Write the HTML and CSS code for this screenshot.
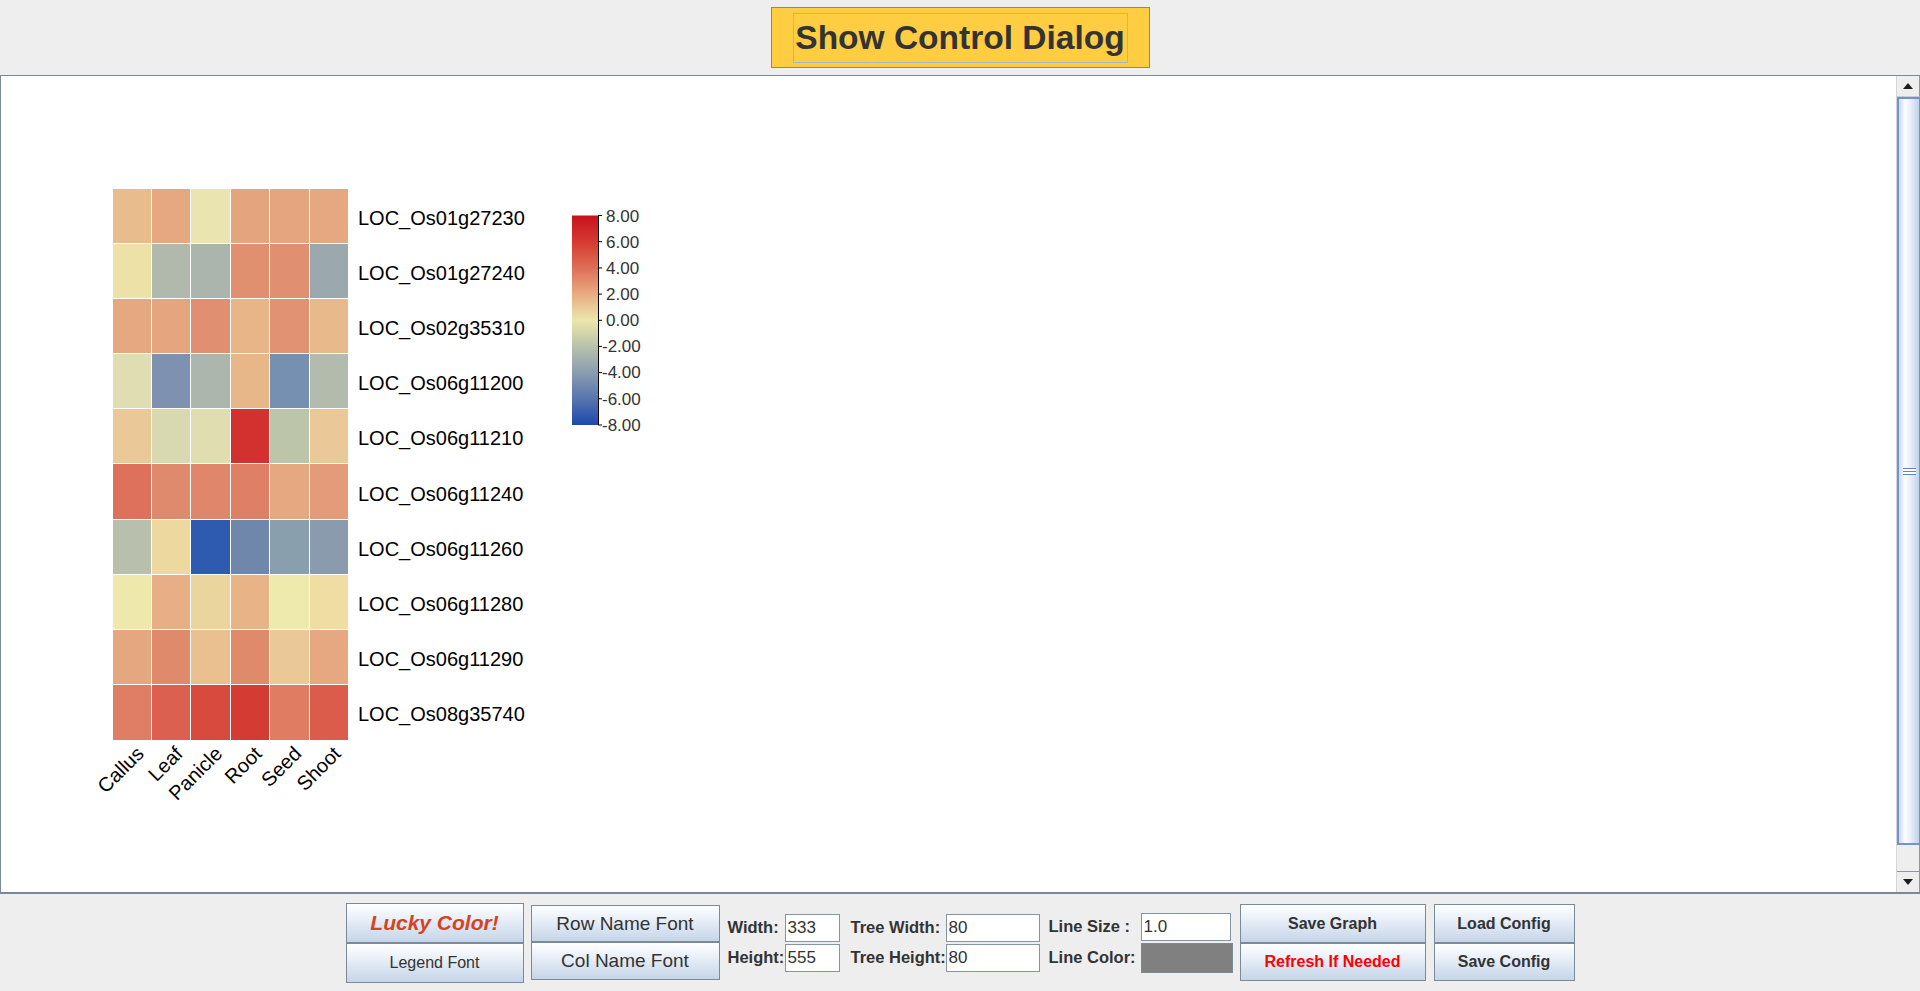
FILE: index.html
```html
<!DOCTYPE html>
<html>
<head>
<meta charset="utf-8">
<title>Heatmap</title>
<link rel="stylesheet" href="styles.css">
</head>
<body>
<header class="topbar">
  <button class="show-btn"><span class="show-focus">Show Control Dialog</span></button>
</header>

<div class="scrollpane">
  <div class="canvas">
    <svg width="700" height="760" viewBox="1 76 700 760" xmlns="http://www.w3.org/2000/svg">
      <defs>
        <linearGradient id="legendGrad" x1="0" y1="0" x2="0" y2="1">
          <stop offset="0" stop-color="#c8101e"/>
          <stop offset="0.125" stop-color="#d53a30"/>
          <stop offset="0.25" stop-color="#de6e58"/>
          <stop offset="0.375" stop-color="#e8ab82"/>
          <stop offset="0.5" stop-color="#ebe7ad"/>
          <stop offset="0.625" stop-color="#b9c1aa"/>
          <stop offset="0.75" stop-color="#8a9db0"/>
          <stop offset="0.875" stop-color="#5775ae"/>
          <stop offset="1" stop-color="#1e48ad"/>
        </linearGradient>
      </defs>
      <g class="cells">
        <!-- row 1 -->
        <rect x="113" y="189" width="38" height="54" fill="#e8bc8c"/>
        <rect x="152" y="189" width="38" height="54" fill="#e5a880"/>
        <rect x="191" y="189" width="39" height="54" fill="#eae5b0"/>
        <rect x="231" y="189" width="38" height="54" fill="#e4a47e"/>
        <rect x="270" y="189" width="39" height="54" fill="#e4a57f"/>
        <rect x="310" y="189" width="38" height="54" fill="#e5a880"/>
        <!-- row 2 -->
        <rect x="113" y="244" width="38" height="54" fill="#ede1a8"/>
        <rect x="152" y="244" width="38" height="54" fill="#b1b9ac"/>
        <rect x="191" y="244" width="39" height="54" fill="#abb5ad"/>
        <rect x="231" y="244" width="38" height="54" fill="#e0906f"/>
        <rect x="270" y="244" width="39" height="54" fill="#e08f70"/>
        <rect x="310" y="244" width="38" height="54" fill="#9ba9ae"/>
        <!-- row 3 -->
        <rect x="113" y="299" width="38" height="54" fill="#e5a880"/>
        <rect x="152" y="299" width="38" height="54" fill="#e5a67f"/>
        <rect x="191" y="299" width="39" height="54" fill="#e08f70"/>
        <rect x="231" y="299" width="38" height="54" fill="#e8b588"/>
        <rect x="270" y="299" width="39" height="54" fill="#e09272"/>
        <rect x="310" y="299" width="38" height="54" fill="#e8ba8b"/>
        <!-- row 4 -->
        <rect x="113" y="354" width="38" height="54" fill="#dfddb1"/>
        <rect x="152" y="354" width="38" height="54" fill="#7e91b0"/>
        <rect x="191" y="354" width="39" height="54" fill="#adb6ad"/>
        <rect x="231" y="354" width="38" height="54" fill="#e8b789"/>
        <rect x="270" y="354" width="39" height="54" fill="#7590b0"/>
        <rect x="310" y="354" width="38" height="54" fill="#b2bbac"/>
        <!-- row 5 -->
        <rect x="113" y="409" width="38" height="54" fill="#ebc898"/>
        <rect x="152" y="409" width="38" height="54" fill="#d8d9b0"/>
        <rect x="191" y="409" width="39" height="54" fill="#e0ddb0"/>
        <rect x="231" y="409" width="38" height="54" fill="#d33030"/>
        <rect x="270" y="409" width="39" height="54" fill="#bcc4aa"/>
        <rect x="310" y="409" width="38" height="54" fill="#ebc898"/>
        <!-- row 6 -->
        <rect x="113" y="464" width="38" height="55" fill="#de715b"/>
        <rect x="152" y="464" width="38" height="55" fill="#e08a6d"/>
        <rect x="191" y="464" width="39" height="55" fill="#e0866a"/>
        <rect x="231" y="464" width="38" height="55" fill="#df7f65"/>
        <rect x="270" y="464" width="39" height="55" fill="#e5a880"/>
        <rect x="310" y="464" width="38" height="55" fill="#e49b79"/>
        <!-- row 7 -->
        <rect x="113" y="520" width="38" height="54" fill="#b8c0ad"/>
        <rect x="152" y="520" width="38" height="54" fill="#edd9a0"/>
        <rect x="191" y="520" width="39" height="54" fill="#2e5ab0"/>
        <rect x="231" y="520" width="38" height="54" fill="#6e87ab"/>
        <rect x="270" y="520" width="39" height="54" fill="#8a9fae"/>
        <rect x="310" y="520" width="38" height="54" fill="#8a9bad"/>
        <!-- row 8 -->
        <rect x="113" y="575" width="38" height="54" fill="#eee8ad"/>
        <rect x="152" y="575" width="38" height="54" fill="#e8af87"/>
        <rect x="191" y="575" width="39" height="54" fill="#ebd59e"/>
        <rect x="231" y="575" width="38" height="54" fill="#e8b387"/>
        <rect x="270" y="575" width="39" height="54" fill="#eee9ad"/>
        <rect x="310" y="575" width="38" height="54" fill="#efdda3"/>
        <!-- row 9 -->
        <rect x="113" y="630" width="38" height="54" fill="#e5a780"/>
        <rect x="152" y="630" width="38" height="54" fill="#e08a6c"/>
        <rect x="191" y="630" width="39" height="54" fill="#eac090"/>
        <rect x="231" y="630" width="38" height="54" fill="#e08a6c"/>
        <rect x="270" y="630" width="39" height="54" fill="#ebc898"/>
        <rect x="310" y="630" width="38" height="54" fill="#e5a880"/>
        <!-- row 10 -->
        <rect x="113" y="685" width="38" height="55" fill="#e07e65"/>
        <rect x="152" y="685" width="38" height="55" fill="#db6050"/>
        <rect x="191" y="685" width="39" height="55" fill="#d84a3e"/>
        <rect x="231" y="685" width="38" height="55" fill="#d43b32"/>
        <rect x="270" y="685" width="39" height="55" fill="#e07c62"/>
        <rect x="310" y="685" width="38" height="55" fill="#dc5c4c"/>
      </g>
      <g class="row-labels">
        <text x="358" y="225">LOC_Os01g27230</text>
        <text x="358" y="280">LOC_Os01g27240</text>
        <text x="358" y="335">LOC_Os02g35310</text>
        <text x="358" y="390">LOC_Os06g11200</text>
        <text x="358" y="445">LOC_Os06g11210</text>
        <text x="358" y="500.5">LOC_Os06g11240</text>
        <text x="358" y="556">LOC_Os06g11260</text>
        <text x="358" y="611">LOC_Os06g11280</text>
        <text x="358" y="666">LOC_Os06g11290</text>
        <text x="358" y="721">LOC_Os08g35740</text>
      </g>
      <g class="col-labels">
        <text transform="translate(145 755) rotate(-45)">Callus</text>
        <text transform="translate(184 755) rotate(-45)">Leaf</text>
        <text transform="translate(223.5 755) rotate(-45)">Panicle</text>
        <text transform="translate(263 755) rotate(-45)">Root</text>
        <text transform="translate(302.5 755) rotate(-45)">Seed</text>
        <text transform="translate(342 755) rotate(-45)">Shoot</text>
      </g>
      <g class="legend">
        <rect x="572" y="215.5" width="26" height="209.5" fill="url(#legendGrad)"/>
        <line x1="598.5" y1="215.5" x2="598.5" y2="425" stroke="#000" stroke-width="1"/>
        <path d="M598 215.5h4 M598 241.7h4 M598 267.9h4 M598 294.1h4 M598 320.3h4 M598 346.4h4 M598 372.6h4 M598 398.8h4 M598 425h4" stroke="#000" stroke-width="1"/>
        <text x="606" y="221.5">8.00</text>
        <text x="606" y="247.5">6.00</text>
        <text x="606" y="273.5">4.00</text>
        <text x="606" y="300">2.00</text>
        <text x="606" y="326">0.00</text>
        <text x="602" y="352">-2.00</text>
        <text x="602" y="378">-4.00</text>
        <text x="602" y="404.5">-6.00</text>
        <text x="602" y="430.5">-8.00</text>
      </g>
    </svg>
  </div>
  <div class="vscroll">
    <div class="sb-btn sb-up"><span class="arrow-up"></span></div>
    <div class="sb-thumb"><span class="grip"></span></div>
    <div class="sb-track"></div>
    <div class="sb-btn sb-down"><span class="arrow-down"></span></div>
  </div>
</div>

<footer class="toolbar">
  <div class="btn-stack stack-a">
    <button class="btn lucky">Lucky Color!</button>
    <button class="btn legend-font">Legend Font</button>
  </div>
  <div class="btn-stack stack-b">
    <button class="btn name-font">Row Name Font</button>
    <button class="btn name-font">Col Name Font</button>
  </div>
  <div class="form form-size">
    <label class="lbl">Width:</label><input class="field" value="333">
    <label class="lbl">Height:</label><input class="field" value="555">
  </div>
  <div class="form form-tree">
    <label class="lbl">Tree Width:</label><input class="field" value="80">
    <label class="lbl">Tree Height:</label><input class="field" value="80">
  </div>
  <div class="form form-line">
    <label class="lbl">Line Size :</label><input class="field" value="1.0">
    <label class="lbl">Line Color:</label><span class="swatch"></span>
  </div>
  <div class="btn-stack stack-c">
    <button class="btn bold">Save Graph</button>
    <button class="btn bold refresh">Refresh If Needed</button>
  </div>
  <div class="btn-stack stack-d">
    <button class="btn bold">Load Config</button>
    <button class="btn bold">Save Config</button>
  </div>
</footer>
</body>
</html>
```
FILE: styles.css
```css
* { box-sizing: border-box; }
html, body { margin: 0; padding: 0; }
body {
  width: 1920px;
  height: 991px;
  overflow: hidden;
  background: #eeeeee;
  font-family: "Liberation Sans", Arial, sans-serif;
  color: #333333;
}

/* top bar */
.topbar {
  height: 75px;
  display: flex;
  justify-content: center;
  align-items: center;
}
.show-btn {
  width: 379px;
  height: 61px;
  padding: 0;
  margin: 0;
  background: #ffcd42;
  border: 1px solid #7b8b9b;
  display: flex;
  align-items: center;
  justify-content: center;
  font-family: inherit;
}
.show-focus {
  width: 335px;
  height: 50px;
  border: 1px solid #a3b8cc;
  display: flex;
  align-items: center;
  justify-content: center;
  white-space: nowrap;
  font-weight: bold;
  font-size: 33.5px;
  color: #333333;
}

/* scroll pane */
.scrollpane {
  height: 819px;
  display: flex;
  border-top: 1px solid #7a8a99;
  border-left: 1px solid #7a8a99;
  border-bottom: 2px solid #7a8a99;
}
.canvas {
  flex: 1;
  background: #ffffff;
  overflow: hidden;
}
.canvas svg { display: block; }
.row-labels text,
.col-labels text {
  font-family: "Liberation Sans", Arial, sans-serif;
  font-size: 20px;
  fill: #000000;
}
.col-labels text { text-anchor: end; }
.legend text {
  font-family: "Liberation Sans", Arial, sans-serif;
  font-size: 17px;
  fill: #333333;
}

.vscroll {
  width: 24px;
  display: flex;
  flex-direction: column;
  background: #eeeeee;
  border-left: 1px solid #d6d6d6;
}
.sb-btn {
  height: 21px;
  display: flex;
  align-items: center;
  justify-content: center;
  border-right: 1px solid #8a98a6;
}
.sb-up { border-bottom: 1px solid #c4ccd4; }
.sb-down { border-top: 1px solid #8a98a6; }
.arrow-up {
  width: 0; height: 0;
  border-left: 5px solid transparent;
  border-right: 5px solid transparent;
  border-bottom: 6px solid #1e1e1e;
}
.arrow-down {
  width: 0; height: 0;
  border-left: 5px solid transparent;
  border-right: 5px solid transparent;
  border-top: 6px solid #1e1e1e;
}
.sb-thumb {
  height: 748px;
  border: 1px solid #7393cf;
  border-width: 2px 1px 2px 2px;
  background: linear-gradient(to right, #c9dbf1 0%, #fbfdff 30%, #e6eef8 60%, #bfd3ea 100%);
  display: flex;
  align-items: center;
  justify-content: center;
}
.grip {
  width: 13px;
  height: 7px;
  background: repeating-linear-gradient(to bottom, #6683c4 0 1px, #ffffff 1px 3px);
}
.sb-track {
  flex: 1;
  border-right: 1px solid #8a98a6;
}

/* bottom toolbar */
.toolbar {
  height: 97px;
  display: flex;
  justify-content: center;
  align-items: center;
}
.btn-stack {
  display: flex;
  flex-direction: column;
}
.btn {
  margin: 0;
  padding: 0;
  border: 1px solid #7a8a99;
  background: linear-gradient(to bottom, #ffffff 0%, #eef3fa 30%, #c5d5e8 100%);
  display: flex;
  align-items: center;
  justify-content: center;
  font-family: "Liberation Sans", Arial, sans-serif;
  color: #333333;
}
.stack-a { width: 178px; }
.stack-a .btn { height: 40px; }
.lucky {
  font-size: 21px;
  font-weight: bold;
  font-style: italic;
  color: #d9411f;
}
.legend-font { font-size: 16px; }

.stack-b { width: 189px; margin-left: 7px; }
.stack-b .btn:first-child { height: 37px; }
.stack-b .btn:last-child { height: 38px; }
.name-font { font-size: 19px; }

.form {
  display: grid;
  row-gap: 2px;
  align-items: center;
}
.lbl {
  font-size: 16.5px;
  font-weight: bold;
  color: #333333;
  white-space: nowrap;
}
.field {
  height: 28px;
  margin: 0;
  padding: 0 0 0 2px;
  border: 1px solid #8494a4;
  background: #ffffff;
  font-family: "Liberation Sans", Arial, sans-serif;
  font-size: 17px;
  color: #333333;
  outline: none;
}
.form-size { margin-left: 8px; grid-template-columns: 57px 55px; }
.form-tree { margin-left: 11px; grid-template-columns: 95px 94px; }
.form-line { margin-left: 9px; grid-template-columns: 87px 92px; column-gap: 5px; }
.form-line .field { width: 90px; }
.swatch {
  display: block;
  width: 92px;
  height: 30px;
  background: #808080;
  border: 1px solid #7a8a99;
}

.stack-c { width: 186px; margin-left: 7px; }
.stack-d { width: 141px; margin-left: 8px; }
.stack-c .btn:first-child,
.stack-d .btn:first-child { height: 39px; }
.stack-c .btn:last-child,
.stack-d .btn:last-child { height: 38px; }
.bold { font-size: 16px; font-weight: bold; }
.refresh { color: #ff0000; }
```
